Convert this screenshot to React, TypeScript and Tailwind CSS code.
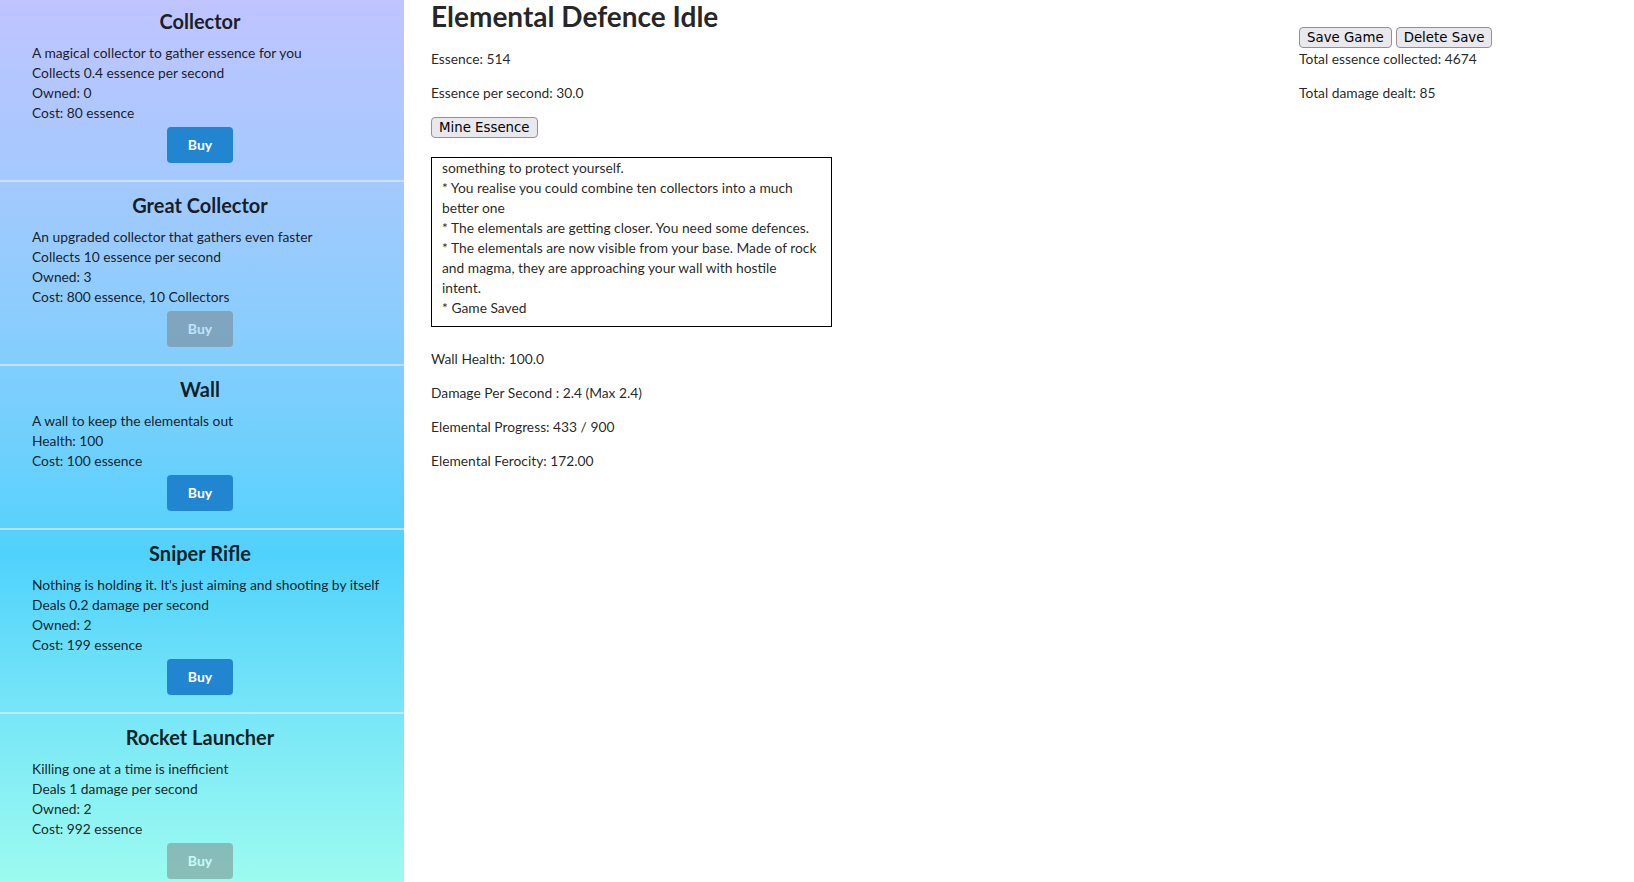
const items = [
  {
    name: "Collector",
    lines: [
      "A magical collector to gather essence for you",
      "Collects 0.4 essence per second",
      "Owned: 0",
      "Cost: 80 essence",
    ],
    canBuy: true,
  },
  {
    name: "Great Collector",
    lines: [
      "An upgraded collector that gathers even faster",
      "Collects 10 essence per second",
      "Owned: 3",
      "Cost: 800 essence, 10 Collectors",
    ],
    canBuy: false,
  },
  {
    name: "Wall",
    lines: ["A wall to keep the elementals out", "Health: 100", "Cost: 100 essence"],
    canBuy: true,
  },
  {
    name: "Sniper Rifle",
    lines: [
      "Nothing is holding it. It's just aiming and shooting by itself",
      "Deals 0.2 damage per second",
      "Owned: 2",
      "Cost: 199 essence",
    ],
    canBuy: true,
  },
  {
    name: "Rocket Launcher",
    lines: [
      "Killing one at a time is inefficient",
      "Deals 1 damage per second",
      "Owned: 2",
      "Cost: 992 essence",
    ],
    canBuy: false,
  },
];

// log is scrolled to the bottom, so the first line starts mid-entry
const logLines = [
  "something to protect yourself.",
  "* You realise you could combine ten collectors into a much",
  "better one",
  "* The elementals are getting closer. You need some defences.",
  "* The elementals are now visible from your base. Made of rock",
  "and magma, they are approaching your wall with hostile",
  "intent.",
  "* Game Saved",
];

function ShopItem({ item, first }: { item: (typeof items)[number]; first: boolean }) {
  return (
    <div className={first ? "pt-[8px] pb-[17px] pr-[4px]" : "border-t-2 border-[#dfe9f2]/70 pt-[10px] pb-[17px] pr-[4px]"}>
      <h2 className="text-center text-[20px] font-bold leading-[27px]">{item.name}</h2>
      <div className="mt-[8px] pl-[32px]">
        {item.lines.map((l) => (
          <div key={l}>{l}</div>
        ))}
      </div>
      <div className="mt-[4px] flex justify-center">
        <button
          className={
            item.canBuy
              ? "h-[36px] rounded-[4px] bg-[#2185d0] px-[21px] text-[14px] font-bold leading-[14px] text-white"
              : "h-[36px] rounded-[4px] bg-[#757575] px-[21px] text-[14px] font-bold leading-[14px] text-white opacity-45"
          }
        >
          Buy
        </button>
      </div>
    </div>
  );
}

const plainBtn =
  "h-[21px] rounded-[4px] border border-[#8f8f9d] bg-[#e9e9ed] px-[7px] font-['DejaVu_Sans',sans-serif] text-[13.33px] leading-[17px] text-black";

export default function App() {
  return (
    <div className="flex min-h-screen bg-white font-['Lato','Helvetica_Neue',Arial,sans-serif] text-[13.8px] leading-[20px] text-black/87">
      <aside className="w-[404px] shrink-0 bg-linear-to-b from-[#c0c4ff] via-[#4fd2fc] via-62% to-[#a0fdef]">
        {items.map((it, i) => (
          <ShopItem key={it.name} item={it} first={i === 0} />
        ))}
      </aside>

      <main className="flex-1 pl-[27px]">
        <h1 className="-mt-[2px] mb-[15px] text-[28px] font-bold leading-[36px]">Elemental Defence Idle</h1>
        <p className="mb-[14px]">Essence: 514</p>
        <p className="mb-[14px]">Essence per second: 30.0</p>
        <button className={plainBtn}>Mine Essence</button>
        <div className="mt-[19px] flex h-[170px] w-[401px] flex-col justify-end overflow-hidden whitespace-nowrap border border-black pl-[10px] pr-[8px] pb-[8px]">
          {logLines.map((l) => (
            <div key={l}>{l}</div>
          ))}
        </div>
        <p className="mt-[22px] mb-[14px]">Wall Health: 100.0</p>
        <p className="mb-[14px]">Damage Per Second : 2.4 (Max 2.4)</p>
        <p className="mb-[14px]">Elemental Progress: 433 / 900</p>
        <p>Elemental Ferocity: 172.00</p>
      </main>

      <section className="w-[335px] shrink-0 pt-[27px]">
        <div className="flex gap-[4px]">
          <button className={plainBtn}>Save Game</button>
          <button className={plainBtn}>Delete Save</button>
        </div>
        <p className="mt-px mb-[14px]">Total essence collected: 4674</p>
        <p>Total damage dealt: 85</p>
      </section>
    </div>
  );
}
